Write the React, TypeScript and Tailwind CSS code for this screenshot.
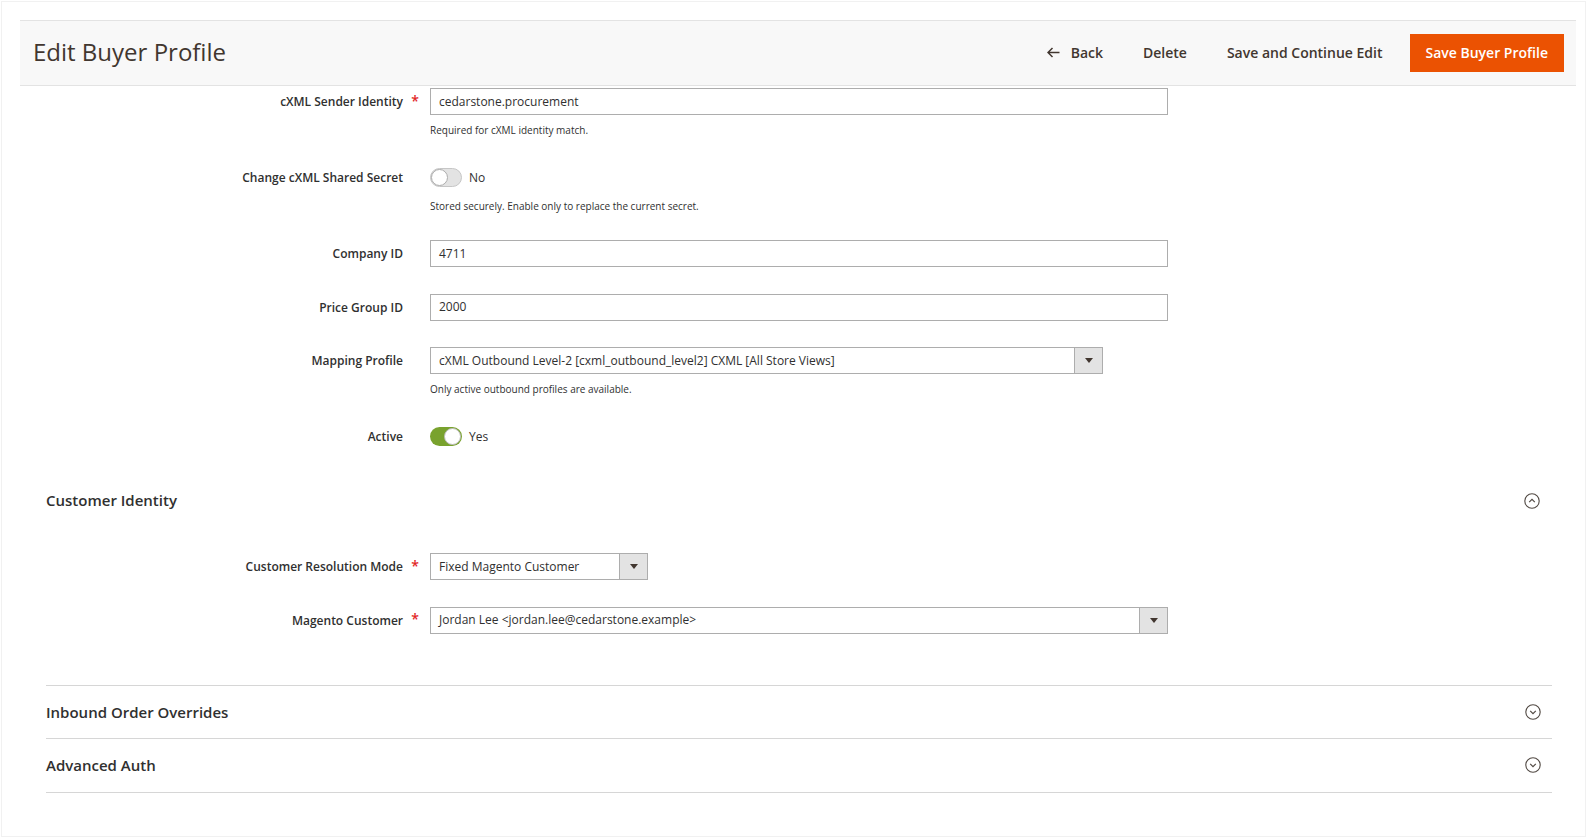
import React from "react";

const Star = () => <span className="text-[14px] font-semibold leading-none text-[#e22626]">*</span>;

function Caret() {
  return (
    <div className="flex w-[28px] shrink-0 items-center justify-center self-stretch border-l border-[#adadad] bg-[#e3e3e3]">
      <svg width="8" height="5" viewBox="0 0 8 5">
        <path d="M0 0 H8 L4 5 Z" fill="#41362f" />
      </svg>
    </div>
  );
}

function Toggle({ on, text }: { on: boolean; text: string }) {
  return (
    <div className="flex h-[27px] items-center gap-[7px]">
      <div
        className={
          on
            ? "flex h-[19px] w-[32px] items-center justify-end rounded-full bg-[#79a22e] p-[1px]"
            : "flex h-[19px] w-[32px] items-center justify-start rounded-full border border-[#c6c6c6] bg-[#e3e3e3]"
        }
      >
        <div
          className={
            on
              ? "h-[17px] w-[17px] rounded-full border border-[#bdbdbd] bg-white"
              : "h-[17px] w-[17px] rounded-full border border-[#adadad] bg-white"
          }
        />
      </div>
      <span className="text-[12px] text-[#303030]">{text}</span>
    </div>
  );
}

function Row({
  label,
  required,
  help,
  children,
}: {
  label: string;
  required?: boolean;
  help?: string;
  children: React.ReactNode;
}) {
  return (
    <div className="mb-[26.5px] flex items-start">
      <div className="w-[401px] shrink-0 text-right text-[12px] font-semibold leading-[27px] text-[#303030]">
        {label}
      </div>
      <div className="flex h-[27px] w-[27px] shrink-0 items-center justify-center pb-[2px] pr-[3px]">
        {required && <Star />}
      </div>
      <div>
        {children}
        {help && <div className="mt-[9px] text-[10px] leading-[13.5px] text-[#303030]">{help}</div>}
      </div>
    </div>
  );
}

function Input({ value, w = "w-[738px]" }: { value: string; w?: string }) {
  return (
    <div className={`${w} flex h-[27px] items-center border border-[#adadad] bg-white px-[8px] text-[12px] text-[#303030]`}>
      {value}
    </div>
  );
}

function Select({ value, w }: { value: string; w: string }) {
  return (
    <div className={`${w} flex h-[27px] border border-[#adadad] bg-white text-[12px] text-[#303030]`}>
      <div className="flex flex-1 items-center px-[8px]">{value}</div>
      <Caret />
    </div>
  );
}

function Chevron({ up }: { up?: boolean }) {
  return (
    <svg width="16" height="16" viewBox="0 0 16 16" fill="none">
      <circle cx="8" cy="8" r="7.2" stroke="#514943" strokeWidth="1.1" />
      <path
        d={up ? "M5.2 9.2 L8 6.4 L10.8 9.2" : "M5.2 6.8 L8 9.6 L10.8 6.8"}
        stroke="#514943"
        strokeWidth="1.2"
      />
    </svg>
  );
}

export default function App() {
  return (
    <div className="h-[838px] w-full overflow-hidden bg-white pl-[1px] pt-[1px] font-['Open_Sans',sans-serif] text-[#303030]">
      <div className="h-[836px] w-[1585px] border border-[#f1f1f1]">
        {/* Sticky page actions */}
        <div className="ml-[18px] mt-[18px] flex h-[66px] w-[1556px] items-center justify-between border-y border-[#e3e3e3] bg-[#f8f8f8] pl-[13px] pr-[12px]">
          <h1 className="-mt-[3px] text-[24px] font-normal text-[#41362f]">Edit Buyer Profile</h1>
          <div className="flex items-center text-[14px] font-semibold text-[#41362f]">
            <button className="-mt-[2px] flex items-center gap-[11px] px-[20px]">
              <svg width="13" height="11" viewBox="0 0 13 11" fill="none">
                <path d="M12.5 5.5 H1.5 M5.5 1 L1 5.5 L5.5 10" stroke="#41362f" strokeWidth="1.5" />
              </svg>
              Back
            </button>
            <button className="-mt-[2px] px-[20px]">Delete</button>
            <button className="-mt-[2px] px-[20px]">Save and Continue Edit</button>
            <button className="ml-[7px] h-[38px] border border-[#eb5202] bg-[#eb5202] px-[15px] pb-[2px] text-white">
              Save Buyer Profile
            </button>
          </div>
        </div>

        {/* General fields */}
        <div className="mt-[2px]">
          <Row label="cXML Sender Identity" required help="Required for cXML identity match.">
            <Input value="cedarstone.procurement" />
          </Row>
          <Row label="Change cXML Shared Secret" help="Stored securely. Enable only to replace the current secret.">
            <Toggle on={false} text="No" />
          </Row>
          <Row label="Company ID">
            <Input value="4711" />
          </Row>
          <Row label="Price Group ID">
            <Input value="2000" />
          </Row>
          <Row label="Mapping Profile" help="Only active outbound profiles are available.">
            <Select
              value="cXML Outbound Level-2 [cxml_outbound_level2] CXML [All Store Views]"
              w="w-[673px]"
            />
          </Row>
          <Row label="Active">
            <Toggle on text="Yes" />
          </Row>
        </div>

        {/* Customer Identity */}
        <div className="ml-[44px] mt-[37px] flex h-[27px] w-[1505px] items-center justify-between pr-[11px]">
          <span className="text-[15px] font-semibold text-[#303030]">Customer Identity</span>
          <Chevron up />
        </div>
        <div className="mt-[39px]">
          <Row label="Customer Resolution Mode" required>
            <Select value="Fixed Magento Customer" w="w-[218px]" />
          </Row>
          <Row label="Magento Customer" required>
            <Select value="Jordan Lee <jordan.lee@cedarstone.example>" w="w-[738px]" />
          </Row>
        </div>

        {/* Collapsed sections */}
        <div className="ml-[44px] mt-[51px] w-[1506px] border-b border-[#d6d6d6]">
          <div className="flex h-[53.5px] items-center justify-between border-t border-[#d6d6d6] pr-[11px]">
            <span className="text-[15px] font-semibold text-[#303030]">Inbound Order Overrides</span>
            <Chevron />
          </div>
          <div className="flex h-[53.5px] items-center justify-between border-t border-[#d6d6d6] pr-[11px]">
            <span className="text-[15px] font-semibold text-[#303030]">Advanced Auth</span>
            <Chevron />
          </div>
        </div>
      </div>
    </div>
  );
}
